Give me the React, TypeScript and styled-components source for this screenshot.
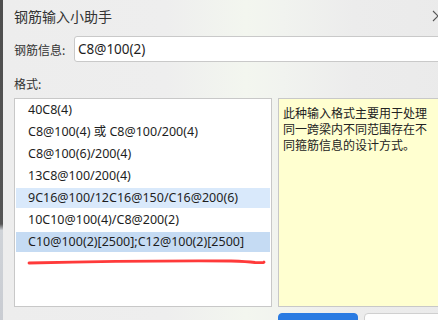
import React from "react";
import styled, { createGlobalStyle } from "styled-components";

const Global = createGlobalStyle`
  html, body { margin: 0; padding: 0; }
  body {
    width: 438px;
    height: 320px;
    overflow: hidden;
    background: #efefef;
    font-family: "Noto Sans", "Noto Sans CJK SC", sans-serif;
  }
`;

const Page = styled.div`
  display: flex;
  width: 470px;
  height: 320px;
  overflow: hidden;
`;

const EdgeStrip = styled.div`
  width: 3px;
  flex: none;
  background: linear-gradient(180deg, #4e4e4e 0%, #555 70%, #cfd3d8 72%, #c9ccd2 100%);
`;

const Window = styled.div`
  flex: 1;
  display: flex;
  flex-direction: column;
  padding-left: 11px;
  background: linear-gradient(
    90deg,
    #ededed 0%,
    #eeeeee 35%,
    #f3f6ef 52%,
    #f1f3ef 60%,
    #ececec 75%,
    #eaeaea 100%
  );
  & > * {
    flex: none;
  }
`;

const TitleBar = styled.div`
  height: 32px;
  display: flex;
  align-items: center;
  justify-content: space-between;
  padding-right: 26px;
`;

const Title = styled.span`
  font-family: "Noto Sans CJK SC", sans-serif;
  font-size: 14px;
  color: #333;
`;

const CloseIcon = styled.svg`
  width: 12px;
  height: 12px;
  flex: none;
`;

const InfoRow = styled.div`
  margin-top: 4px;
  display: flex;
  align-items: center;
  height: 26px;
`;

const Label = styled.span`
  font-family: "Noto Sans CJK SC", sans-serif;
  font-size: 12px;
  color: #333;
  width: 60px;
  flex: none;
`;

const TextInput = styled.div`
  flex: 1;
  height: 24px;
  border: 1px solid #c9c9c9;
  border-radius: 3px;
  background: #fff;
  display: flex;
  align-items: center;
  padding-left: 3px;
  font-size: 13.5px;
  color: #1e1e1e;
`;

const SectionLabel = styled(Label)`
  display: block;
  margin-top: 12px;
  height: 20px;
  line-height: 20px;
`;

const Body = styled.div`
  margin-top: 4px;
  display: grid;
  grid-template-columns: 258px 1fr;
  grid-template-rows: 209px auto;
  column-gap: 6px;
  row-gap: 6px;
`;

const ListBox = styled.div`
  position: relative;
  border: 1px solid #c8c8c8;
  background: #fff;
  padding: 1px;
  display: flex;
  flex-direction: column;
  gap: 2px;
`;

const ListItem = styled.div<{ $state?: "hover" | "selected" }>`
  height: 20px;
  line-height: 20px;
  padding-left: 12px;
  font-size: 12.5px;
  color: #1e1e1e;
  white-space: nowrap;
  background: ${(p) =>
    p.$state === "selected" ? "#c5dbf3" : p.$state === "hover" ? "#d9e9fb" : "transparent"};
`;

const Underline = styled.svg`
  position: absolute;
  left: 0;
  top: 0;
  width: 258px;
  height: 209px;
  pointer-events: none;
`;

const NotePanel = styled.div`
  border: 1px solid #c8c8c8;
  background: #ffffd0;
  padding: 6px 4px;
`;

const NoteText = styled.p`
  margin: 0;
  width: 150px;
  font-family: "Noto Sans CJK SC", sans-serif;
  font-size: 12px;
  line-height: 16px;
  color: #222;
`;

const ButtonRow = styled.div`
  grid-column: 2;
  display: flex;
  gap: 6px;
`;

const Button = styled.div<{ $primary?: boolean }>`
  width: 80px;
  height: 28px;
  border-radius: 4px;
  box-sizing: border-box;
  background: ${(p) => (p.$primary ? "#2a7be2" : "#fdfdfd")};
  border: 1px solid ${(p) => (p.$primary ? "#2a7be2" : "#cfcfcf")};
`;

const items: { text: string; state?: "hover" | "selected" }[] = [
  { text: "40C8(4)" },
  { text: "C8@100(4) 或 C8@100/200(4)" },
  { text: "C8@100(6)/200(4)" },
  { text: "13C8@100/200(4)" },
  { text: "9C16@100/12C16@150/C16@200(6)", state: "hover" },
  { text: "10C10@100(4)/C8@200(2)" },
  { text: "C10@100(2)[2500];C12@100(2)[2500]", state: "selected" },
];

export default function App() {
  return (
    <>
      <Global />
      <Page>
        <EdgeStrip />
        <Window>
          <TitleBar>
            <Title>钢筋输入小助手</Title>
            <CloseIcon viewBox="0 0 12 12">
              <path d="M1 1 L11 11 M11 1 L1 11" stroke="#555" strokeWidth="1.1" fill="none" />
            </CloseIcon>
          </TitleBar>
          <InfoRow>
            <Label>钢筋信息:</Label>
            <TextInput>C8@100(2)</TextInput>
          </InfoRow>
          <SectionLabel>格式:</SectionLabel>
          <Body>
            <ListBox>
              {items.map((it) => (
                <ListItem key={it.text} $state={it.state}>
                  {it.text}
                </ListItem>
              ))}
              <Underline viewBox="0 0 258 209">
                <path
                  d="M14 164 Q120 161.5 216 162 Q232 162.5 240 163.5 Q250 163.8 249 163"
                  stroke="#ff3a3a"
                  strokeWidth="2.8"
                  strokeLinecap="round"
                  fill="none"
                />
              </Underline>
            </ListBox>
            <NotePanel>
              <NoteText>此种输入格式主要用于处理同一跨梁内不同范围存在不同箍筋信息的设计方式。</NoteText>
            </NotePanel>
            <ButtonRow>
              <Button $primary />
              <Button />
            </ButtonRow>
          </Body>
        </Window>
      </Page>
    </>
  );
}
